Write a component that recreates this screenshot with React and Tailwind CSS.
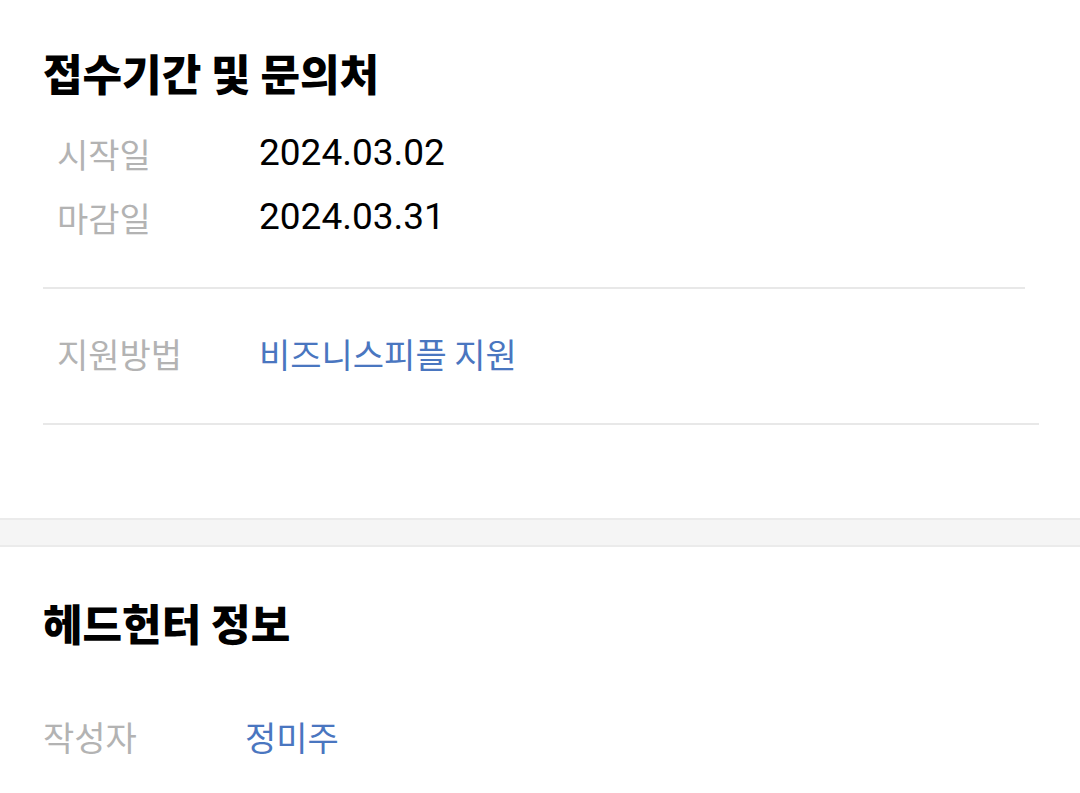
import React from 'react';

const kr = { fontFamily: '"Noto Sans CJK KR", "Noto Sans", sans-serif' };
const num = { fontFamily: 'Roboto, "Noto Sans CJK KR", sans-serif' };

const Row = ({ label, children, className = '' }) => (
    <div className={`flex items-center h-[64px] ${className}`}>
        <div className="w-[202px] shrink-0 text-[34px] text-[#b3b3b3]" style={kr}>
            {label}
        </div>
        {children}
    </div>
);

const App = () => {
    const periods = [
        { label: '시작일', value: '2024.03.02' },
        { label: '마감일', value: '2024.03.31' },
    ];

    return (
        <div className="w-[1080px] h-[793px] bg-white overflow-hidden flex flex-col">
            <div className="pl-[43px] flex flex-col">
                <h2 className="mt-[48px] h-[48px] leading-[48px] text-[43px] font-black text-black" style={kr}>
                    접수기간 및 문의처
                </h2>
                <div className="mt-[25px] pl-[14px]">
                    {periods.map(p => (
                        <Row key={p.label} label={p.label}>
                            <span className="text-[37px] text-black" style={num}>{p.value}</span>
                        </Row>
                    ))}
                </div>
                <div className="mt-[38px] w-[982px] h-[2px] bg-[#e8e8e8]" />
                <Row label="지원방법" className="mt-[32px] pl-[14px]">
                    <span className="text-[34px] text-[#4a76c0]" style={kr}>비즈니스피플 지원</span>
                </Row>
                <div className="mt-[38px] w-[996px] h-[2px] bg-[#e8e8e8]" />
            </div>

            <div className="mt-[93px] h-[29px] bg-[#f5f5f5] border-y-2 border-[#ebebeb]" />

            <div className="pl-[43px] flex flex-col">
                <h2 className="mt-[51px] h-[48px] leading-[48px] text-[43px] font-black text-black" style={kr}>
                    헤드헌터 정보
                </h2>
                <Row label="작성자" className="mt-[58px]">
                    <span className="text-[34px] text-[#4a76c0]" style={kr}>정미주</span>
                </Row>
            </div>
        </div>
    );
};

export default App;
